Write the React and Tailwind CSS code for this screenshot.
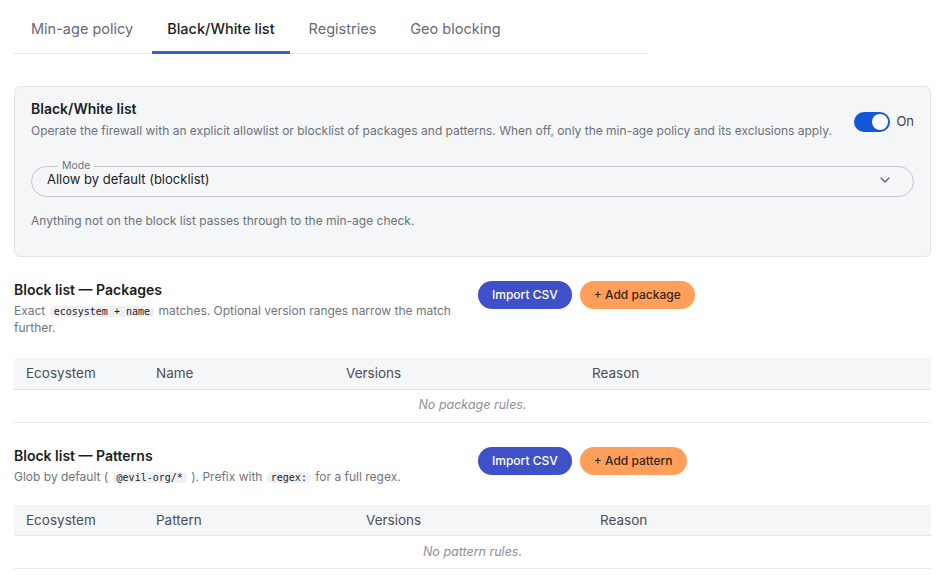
import { ChevronDown } from 'lucide-react'

const tabs = ['Min-age policy', 'Black/White list', 'Registries', 'Geo blocking']

function Code({ children }) {
  return (
    <code className="mx-px rounded bg-[#eef0f3] px-1 font-['DejaVu_Sans_Mono',monospace] text-[10px] leading-[14px] text-[#1f2329]">
      {children}
    </code>
  )
}

function RuleSection({ title, description, addLabel, columns, emptyText, tableGap = 'mt-[22px]' }) {
  return (
    <section>
      <div className="flex items-start">
        <div className="w-[464px] pr-4">
          <h3 className="text-[14px] font-semibold leading-5 text-[#1b1d22]">{title}</h3>
          <p className="mt-[2px] text-[12px] leading-[17px] text-[#70747c]">{description}</p>
        </div>
        <div className="mt-[1px] flex gap-2">
          <button
            type="button"
            className="h-[28px] rounded-full bg-[#3f51c8] px-[14px] text-[12px] font-medium text-white"
          >
            Import CSV
          </button>
          <button
            type="button"
            className="h-[28px] rounded-full bg-[#ff9f5b] px-[14px] text-[12px] font-medium text-[#3a2414]"
          >
            {addLabel}
          </button>
        </div>
      </div>

      <table className={`${tableGap} w-full border-collapse text-left`}>
        <thead>
          <tr className="border-b border-[#e3e5e9] bg-[#f5f6f8]">
            {columns.map(([label, width]) => (
              <th
                key={label}
                className={`${width} h-[31px] px-3 text-[13.5px] font-normal text-[#4a4e56]`}
              >
                {label}
              </th>
            ))}
          </tr>
        </thead>
        <tbody>
          <tr className="border-b border-[#e8eaee]">
            <td colSpan={4} className="h-[33px] text-center text-[12.5px] italic text-[#8c9098]">
              {emptyText}
            </td>
          </tr>
        </tbody>
      </table>
    </section>
  )
}

export default function App() {
  return (
    <div className="min-h-screen bg-white px-[14px] font-['Inter',sans-serif] text-[#1b1d22]">
      <nav className="flex w-[634px] border-b border-[#e6e7ea]">
        {tabs.map((tab) => {
          const active = tab === 'Black/White list'
          return (
            <button
              key={tab}
              type="button"
              className={[
                'relative h-[53px] px-[17px] pt-[4px] text-[14.5px]',
                active ? 'font-medium text-[#1b1d22]' : 'text-[#646a78]',
              ].join(' ')}
            >
              {tab}
              {active && <span className="absolute -bottom-px left-[2px] right-[2px] h-[3px] bg-[#3e5bd8]" />}
            </button>
          )
        })}
      </nav>

      <div className="mt-[32px] rounded-md border border-[#e2e4e8] bg-[#f5f6f8] px-4 pb-[26px] pt-[12px]">
        <div className="flex items-center">
          <div className="flex-1">
            <h2 className="text-[14px] font-semibold leading-5">Black/White list</h2>
            <p className="mt-[3px] text-[12px] text-[#6c7079]">
              Operate the firewall with an explicit allowlist or blocklist of packages and patterns. When off, only the
              min-age policy and its exclusions apply.
            </p>
          </div>
          <div className="ml-4 mt-[4px] flex items-center gap-[6px]">
            <span className="flex h-[20px] w-[36px] items-center justify-end rounded-full bg-[#1458d8] px-[2px]">
              <span className="h-[16px] w-[16px] rounded-full bg-white" />
            </span>
            <span className="text-[13px] text-[#3a3e45]">On</span>
          </div>
        </div>

        <fieldset className="mt-[21px] flex h-[36px] items-center rounded-full border border-[#c4c6cc] pl-[15px] pr-[20px]">
          <legend className="ml-[11px] px-[4px] text-[10.5px] leading-[10px] text-[#70747c]">Mode</legend>
          <span className="-mt-[7px] flex-1 text-[13px] text-[#1b1d22]">Allow by default (blocklist)</span>
          <ChevronDown size={16} strokeWidth={1.75} className="-mt-[7px] text-[#555a63]" />
        </fieldset>

        <p className="mt-[15px] text-[12px] text-[#6c7079]">Anything not on the block list passes through to the min-age check.</p>
      </div>

      <div className="mt-[23px]">
        <RuleSection
          title="Block list — Packages"
          description={
            <>
              Exact <Code>ecosystem + name</Code> matches. Optional version ranges narrow the match further.
            </>
          }
          addLabel="+ Add package"
          columns={[
            ['Ecosystem', 'w-[130px]'],
            ['Name', 'w-[190px]'],
            ['Versions', 'w-[246px]'],
            ['Reason', ''],
          ]}
          emptyText="No package rules."
        />
      </div>

      <div className="mt-[23px]">
        <RuleSection
          title="Block list — Patterns"
          description={
            <>
              Glob by default ( <Code>@evil-org/*</Code> ). Prefix with <Code>regex:</Code> for a full regex.
            </>
          }
          addLabel="+ Add pattern"
          columns={[
            ['Ecosystem', 'w-[130px]'],
            ['Pattern', 'w-[210px]'],
            ['Versions', 'w-[234px]'],
            ['Reason', ''],
          ]}
          emptyText="No pattern rules."
          tableGap="mt-[20px]"
        />
      </div>
    </div>
  )
}
